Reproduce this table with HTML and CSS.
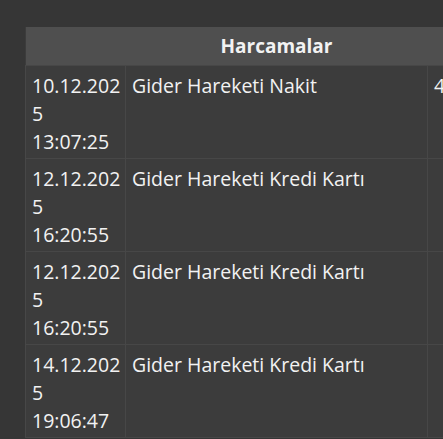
FILE: index.html
```html
<!DOCTYPE html>
<html lang="tr">
<head>
<meta charset="utf-8">
<title>Harcamalar</title>
<link rel="stylesheet" href="styles.css">
</head>
<body>
<div class="page">
  <table class="grid">
    <colgroup>
      <col class="c-date">
      <col class="c-desc">
      <col class="c-amt">
    </colgroup>
    <thead>
      <tr><th colspan="3">Harcamalar</th></tr>
    </thead>
    <tbody>
      <tr><td class="date"><span class="d">10.12.2025</span><span class="t">13:07:25</span></td><td>Gider Hareketi Nakit</td><td>450,00</td></tr>
      <tr><td class="date"><span class="d">12.12.2025</span><span class="t">16:20:55</span></td><td>Gider Hareketi Kredi Kartı</td><td></td></tr>
      <tr><td class="date"><span class="d">12.12.2025</span><span class="t">16:20:55</span></td><td>Gider Hareketi Kredi Kartı</td><td></td></tr>
      <tr><td class="date"><span class="d">14.12.2025</span><span class="t">19:06:47</span></td><td>Gider Hareketi Kredi Kartı</td><td></td></tr>
    </tbody>
  </table>
</div>
</body>
</html>
```
FILE: styles.css
```css
html, body {
  margin: 0;
  padding: 0;
  background: #363636;
  overflow: hidden;
}
.page {
  padding: 27px 0 0 25px;
  width: 600px;
}
.grid {
  border-collapse: collapse;
  table-layout: fixed;
  width: 502px;
  font-family: "Open Sans", "Noto Sans", sans-serif;
  font-size: 19.5px;
  line-height: 28px;
  color: #f2f2f2;
  background: #3c3c3c;
}
.c-date { width: 100px; }
.c-desc { width: 302px; }
.c-amt { width: 100px; }
.grid th {
  background: #4f4f4f;
  font-weight: 700;
  font-size: 19px;
  height: 38px;
  padding: 0 6px;
  text-align: center;
  box-sizing: border-box;
}
.grid td {
  border: 1px solid #474747;
  padding: 6px 4px 2px 6px;
  vertical-align: top;
  height: 93px;
  box-sizing: border-box;
}
.grid td.date { word-break: break-all; }
.date .d, .date .t { display: block; }
```
